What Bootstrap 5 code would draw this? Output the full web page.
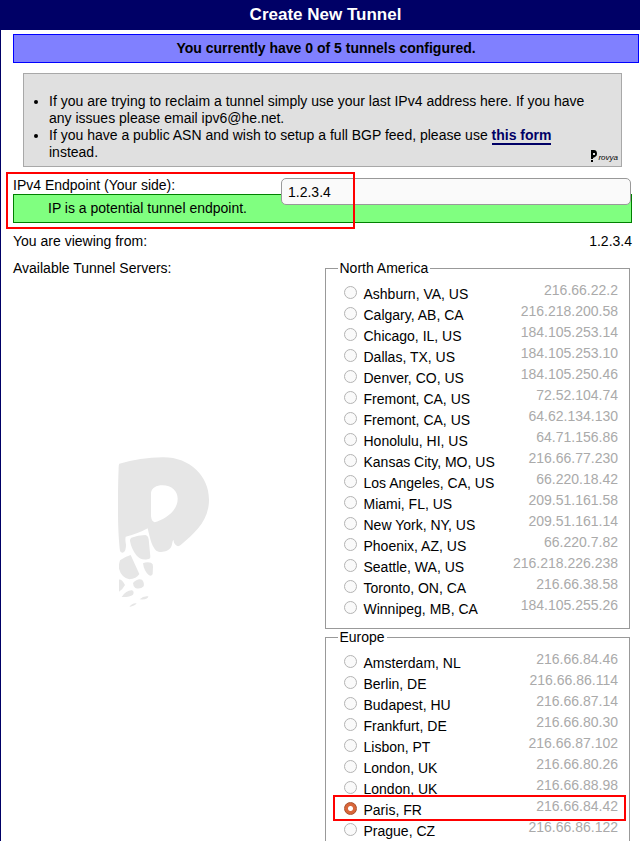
<!DOCTYPE html>
<html lang="en">
<head>
<meta charset="utf-8">
<meta name="viewport" content="width=device-width, initial-scale=1">
<title>Create New Tunnel</title>
<link href="https://cdn.jsdelivr.net/npm/bootstrap@5.3.0/dist/css/bootstrap.min.css" rel="stylesheet">
<style>
body { font: 14px/17px "Liberation Sans", Arial, sans-serif; color: #000; background: #fff; }
.panel { border-left: 1px solid #006; }
.panel-title { background: #006; color: #fff; font-size: 17px; line-height: 30px; padding-left: 10px; }
.panel-body { padding: 4px 1px 0 12px; }
.quota { background: #8080ff; border: 1px solid #00f; line-height: 27px; }
.hints { background: #e0e0e0; border: 1px solid #a8a8a8; margin: 10px 17px 10px 10px; padding: 19px 20px 5px 25px; }
.hints a { color: #006; border-bottom: 2px solid #006; }
.brand { right: 3px; bottom: 3px; font: italic 8px/11px "Liberation Sans", Arial, sans-serif; }
.form-area { padding-right: 7px; }
.endpoint-input { top: 1px; right: 1px; width: 350px; height: 27px; padding: 0 6px; border: 1px solid #999; border-radius: 5px; background: #fafafa; color: #000; z-index: 1; }
.endpoint-ok { background: #80ff80; border: 1px solid #008000; line-height: 27px; padding-left: 34px; }
.callout { border: 2px solid #f00; pointer-events: none; z-index: 2; }
.callout-endpoint { left: -7px; top: -5px; width: 349px; bottom: -6px; }
.callout-server { left: -11px; right: -8px; top: -4px; bottom: -1px; }
.viewing { margin: 10px 0; }
.side { padding-right: 8px; }
.regions { padding: 0 2px; }
.watermark { margin: 180px auto 0; fill: #e6e6e6; }
.region { border: 1px solid #999; padding: 6px 11px 9px 18px; }
.region-open { border-bottom: 0; padding-bottom: 0; }
.region legend { font-size: 14px; line-height: 17px; margin-left: -6px; padding: 0 2px; }
.server { height: 21px; }
.server input { appearance: none; width: 13px; height: 13px; margin: 3px 7px 0 0; border: 1px solid #b4b4b4; border-radius: 50%; background: #fafafa; }
.server input:checked { border-color: #a94f2b; background: radial-gradient(circle, #fff 0 2px, #d9663a 3px); }
.server label { line-height: 22px; }
.server output { color: #aaa; line-height: 14px; }
</style>
<script src="https://cdn.jsdelivr.net/npm/bootstrap@5.3.0/dist/js/bootstrap.bundle.min.js"></script>
</head>
<body>
<main class="panel">
  <h1 class="panel-title fw-bold text-center m-0">Create New Tunnel</h1>
  <div class="panel-body">
    <div class="quota fw-bold text-center">You currently have 0 of 5 tunnels configured.</div>
    <div class="hints position-relative">
      <ul class="m-0 p-0">
        <li>If you are trying to reclaim a tunnel simply use your last IPv4 address here. If you have any issues please email ipv6@he.net.</li>
        <li>If you have a public ASN and wish to setup a full BGP feed, please use <a href="#" class="fw-bold text-decoration-none">this form</a> instead.</li>
      </ul>
      <div class="brand position-absolute d-flex align-items-end">
        <svg width="8" height="13" viewBox="0 0 8 13" aria-hidden="true"><path fill-rule="evenodd" d="M1 0H4Q7 0 7 4Q7 6 5 7L3 8V9L1 9ZM3 3V5H5V3ZM1 10H3V12H1Z"/></svg>
        <span>rovya</span>
      </div>
    </div>
    <form class="form-area">
      <div class="position-relative">
        <label class="d-block" for="endpoint">IPv4 Endpoint (Your side):</label>
        <input class="endpoint-input position-absolute" id="endpoint" type="text" value="1.2.3.4">
        <div class="endpoint-ok">IP is a potential tunnel endpoint.</div>
        <div class="callout callout-endpoint position-absolute"></div>
      </div>
      <div class="viewing d-flex justify-content-between"><span>You are viewing from:</span><span>1.2.3.4</span></div>
      <div class="d-flex">
        <div class="side w-50">
          <div>Available Tunnel Servers:</div>
          <svg class="watermark d-block" width="92" height="151" viewBox="54 50 276 453" aria-hidden="true">
            <path fill-rule="evenodd" d="M58 70Q120 52 188 51C270 50 327 108 327 178C327 240 286 277 242 314Q234 321 227 314Q221 308 220 298C216 305 217 314 213 321C205 334 181 339 169 331C157 321 151 300 143 264Q115 280 77 289Q75 298 78 313Q78 330 71 336Q64 339 60 332C52 270 53 160 56 80Q56 72 58 70ZM153 157C155 143 169 135 187 135C216 135 233 153 233 175C233 214 192 238 164 246Q155 244 153 228Z"/>
            <path d="M94 292Q114 284 136 284Q144 285 146 297L151 348Q152 357 142 357Q121 360 109 345Q94 325 90 302Q89 296 94 292ZM60 360Q75 349 92 344L118 401Q109 416 88 417Q64 411 57 385Q56 369 60 360ZM129 369Q140 364 153 367Q160 370 159 379L158 401Q155 408 147 405Q132 393 129 369ZM57 418Q65 416 75 434Q67 449 57 454ZM99 428Q112 414 126 418Q134 427 131 438Q121 448 106 443Q99 437 99 428ZM65 470Q79 449 96 450Q104 454 99 463Q88 471 65 470ZM119 477Q130 466 145 468Q145 479 119 477ZM88 500Q97 487 110 489Q105 497 88 500Z"/>
          </svg>
        </div>
        <div class="regions w-50">
          <fieldset class="region" id="north-america"><legend class="float-none w-auto mb-0">North America</legend></fieldset>
          <fieldset class="region region-open" id="europe"><legend class="float-none w-auto mb-0">Europe</legend></fieldset>
        </div>
      </div>
    </form>
  </div>
</main>
<script>
const regions = {
  "north-america": [["Ashburn, VA, US", "216.66.22.2"], ["Calgary, AB, CA", "216.218.200.58"], ["Chicago, IL, US", "184.105.253.14"], ["Dallas, TX, US", "184.105.253.10"], ["Denver, CO, US", "184.105.250.46"], ["Fremont, CA, US", "72.52.104.74"], ["Fremont, CA, US", "64.62.134.130"], ["Honolulu, HI, US", "64.71.156.86"], ["Kansas City, MO, US", "216.66.77.230"], ["Los Angeles, CA, US", "66.220.18.42"], ["Miami, FL, US", "209.51.161.58"], ["New York, NY, US", "209.51.161.14"], ["Phoenix, AZ, US", "66.220.7.82"], ["Seattle, WA, US", "216.218.226.238"], ["Toronto, ON, CA", "216.66.38.58"], ["Winnipeg, MB, CA", "184.105.255.26"]],
  "europe": [["Amsterdam, NL", "216.66.84.46"], ["Berlin, DE", "216.66.86.114"], ["Budapest, HU", "216.66.87.14"], ["Frankfurt, DE", "216.66.80.30"], ["Lisbon, PT", "216.66.87.102"], ["London, UK", "216.66.80.26"], ["London, UK", "216.66.88.98"], ["Paris, FR", "216.66.84.42"], ["Prague, CZ", "216.66.86.122"]]
};
for (const [id, servers] of Object.entries(regions)) {
  servers.forEach(([city, ip], i) => {
    const chosen = city === "Paris, FR";
    document.getElementById(id).insertAdjacentHTML("beforeend",
      `<div class="server d-flex align-items-start position-relative">
        <input type="radio" name="server" id="${id}-${i}" value="${ip}"${chosen ? " checked" : ""}>
        <label for="${id}-${i}">${city}</label>
        <output class="ms-auto" for="${id}-${i}">${ip}</output>
        ${chosen ? '<div class="callout callout-server position-absolute"></div>' : ""}
      </div>`);
  });
}
</script>
</body>
</html>
